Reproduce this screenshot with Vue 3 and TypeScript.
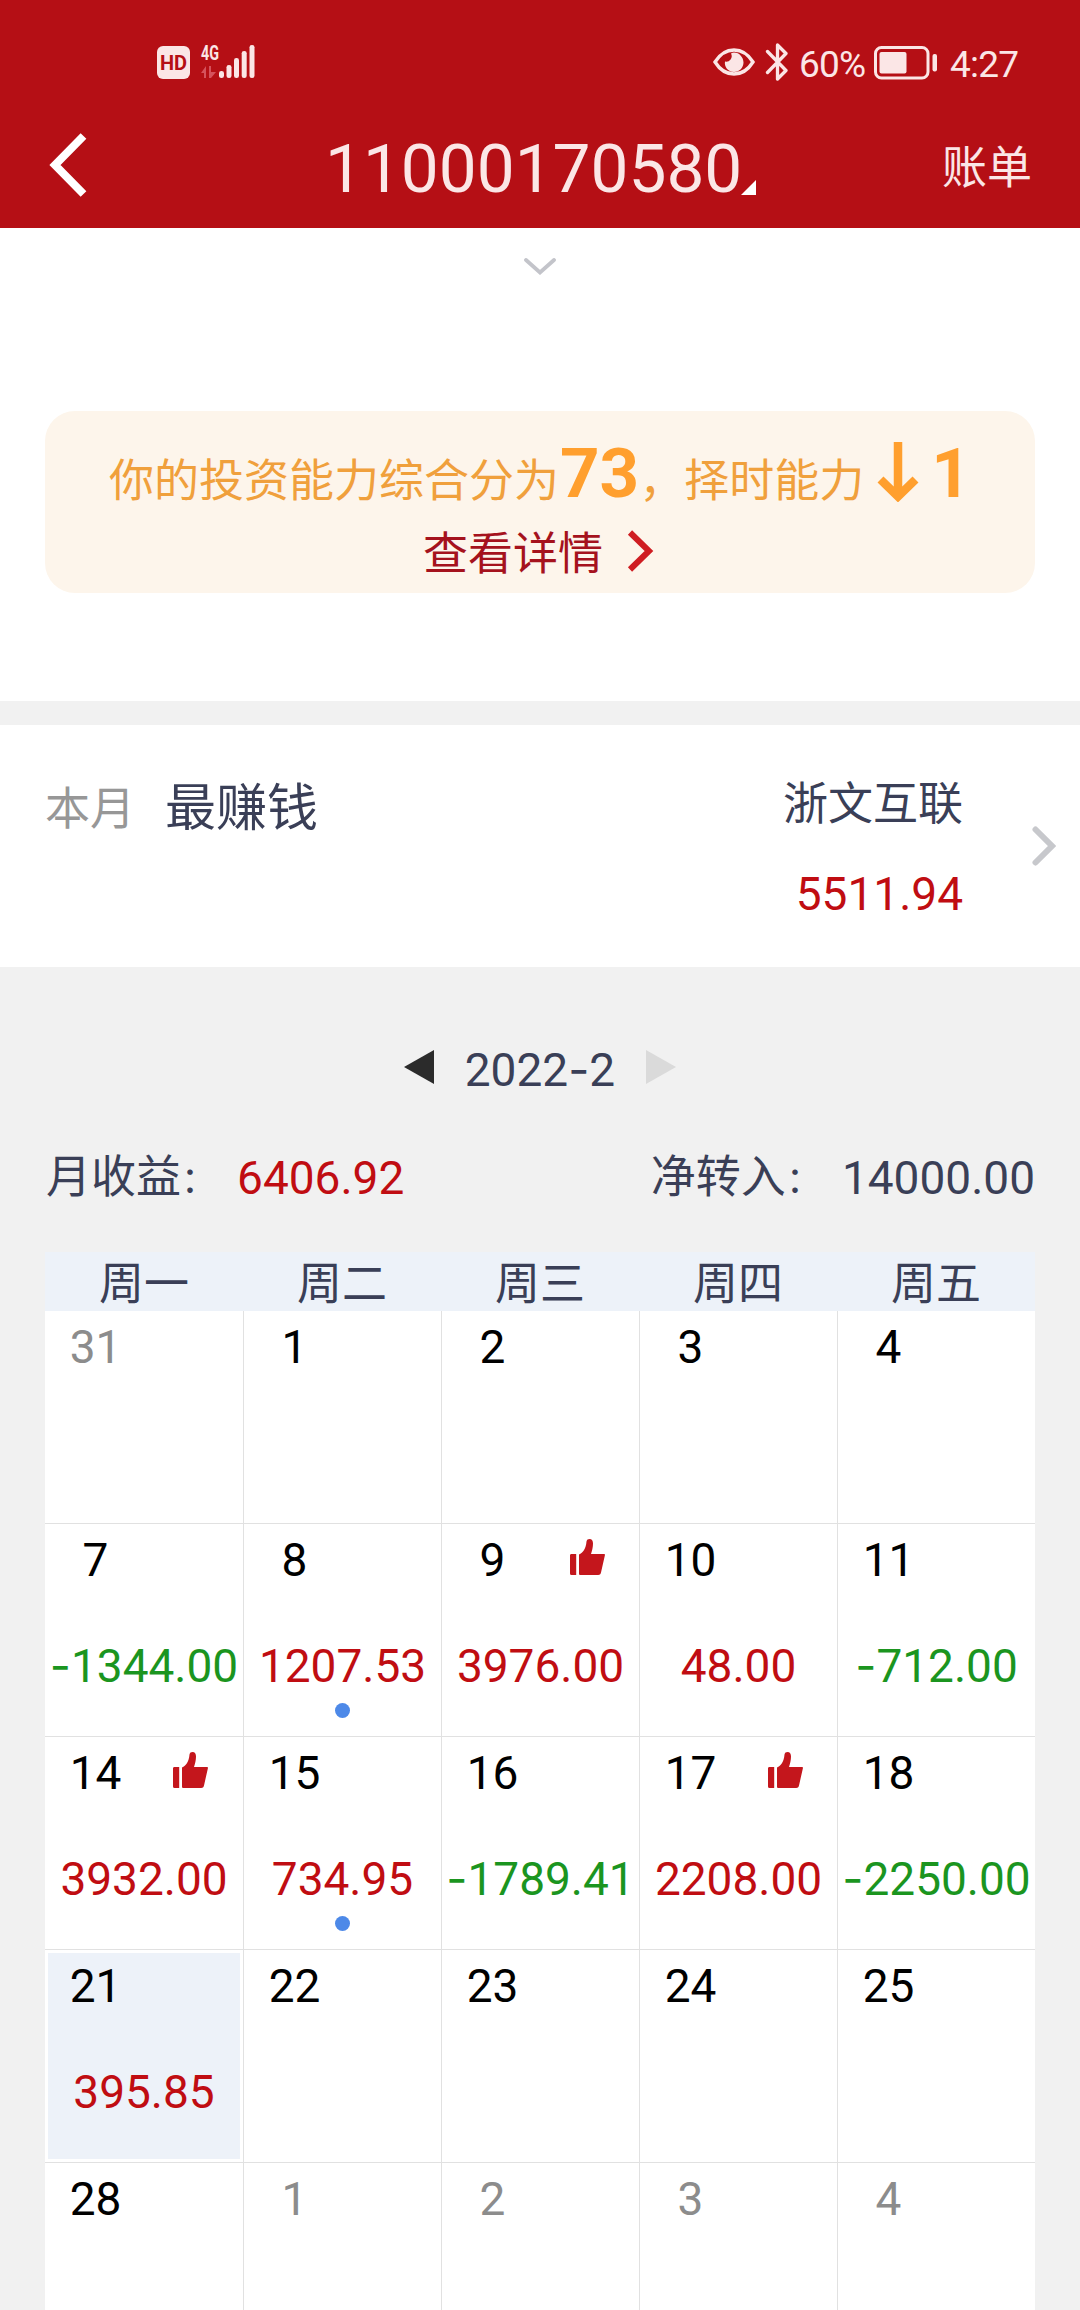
<script setup lang="ts">
interface Day {
  day: number
  value?: string
  top?: boolean
  dot?: boolean
  muted?: boolean
  selected?: boolean
}

const weekdays: string[] = ['周一', '周二', '周三', '周四', '周五']

const days: Day[] = [
  { day: 31, muted: true }, { day: 1 }, { day: 2 }, { day: 3 }, { day: 4 },
  { day: 7, value: '-1344.00' },
  { day: 8, value: '1207.53', dot: true },
  { day: 9, value: '3976.00', top: true },
  { day: 10, value: '48.00' },
  { day: 11, value: '-712.00' },
  { day: 14, value: '3932.00', top: true },
  { day: 15, value: '734.95', dot: true },
  { day: 16, value: '-1789.41' },
  { day: 17, value: '2208.00', top: true },
  { day: 18, value: '-2250.00' },
  { day: 21, value: '395.85', selected: true },
  { day: 22 }, { day: 23 }, { day: 24 }, { day: 25 },
  { day: 28 },
  { day: 1, muted: true }, { day: 2, muted: true }, { day: 3, muted: true }, { day: 4, muted: true },
]

const isLoss = (value: string): boolean => value.startsWith('-')
const digits = (value: string): string => value.replace('-', '')
</script>

<template>
  <div class="screen" lang="zh-CN">
    <header class="header">
      <div class="status">
        <div class="status-left">
          <span class="hd">HD</span>
          <svg class="signal" width="56" height="46" viewBox="0 -10 56 46">
            <text x="1" y="17" class="net" textLength="18" lengthAdjust="spacingAndGlyphs">4G</text>
            <g fill="#d5525c">
              <path d="M6 23v12H4V30H1z M9 23h2v6h5l-5 6H9z" />
            </g>
            <g fill="#fbe6e6">
              <rect x="19" y="28" width="5" height="7" rx="2.3" />
              <rect x="26.500" y="22" width="5" height="13" rx="2.3" />
              <rect x="34" y="15" width="5" height="20" rx="2.3" />
              <rect x="41.700" y="8" width="5" height="27" rx="2.300" />
              <rect x="49.500" y="2" width="5" height="33" rx="2.300" />
            </g>
          </svg>
        </div>
        <div class="status-right">
          <svg class="eye" width="42" height="30" viewBox="0 0 42 30">
            <path d="M2 15C7 7 13 3 21 3s14 4 19 12c-5 8-11 12-19 12S7 23 2 15z" fill="none" stroke="#fbe6e6" stroke-width="3.400" />
            <path d="M18 6.500a5.500 5.500 0 0 1-6 8c-1 5 3 10.500 9 10.500 5.500 0 9.500-4.500 9.500-9.500S26.500 5.500 21 5.500c-1 0-2 .3-3 1z" fill="#fbe6e6" />
          </svg>
          <svg class="bt" width="24" height="38" viewBox="0 0 24 38">
            <path d="M2.500 8.500 21 27.500 12.500 36V2L21 10.500 2.500 29.500" fill="none" stroke="#fbe6e6" stroke-width="3.300" stroke-linejoin="round" stroke-linecap="round" />
          </svg>
          <span class="percent">60%</span>
          <svg class="battery" width="64" height="34" viewBox="0 0 64 34">
            <rect x="1.500" y="1.500" width="52.500" height="30.500" rx="6" fill="none" stroke="#fbe6e6" stroke-width="3" />
            <rect x="5.500" y="6" width="27" height="21.500" rx="2" fill="#fbe6e6" />
            <rect x="58.500" y="8" width="4.500" height="17.500" rx="2" fill="#fbe6e6" />
          </svg>
          <span class="clock">4:27</span>
        </div>
      </div>
      <nav class="nav">
        <svg class="back" width="40" height="66" viewBox="0 0 40 66">
          <path d="M34.500 4 6 33l28.500 29" fill="none" stroke="#fff" stroke-width="8" />
        </svg>
        <div class="account">
          <span>11000170580</span>
          <svg width="15" height="15" viewBox="0 0 15 15"><path d="M15 0v15H0z" fill="#fff" /></svg>
        </div>
        <span class="bill">账单</span>
      </nav>
    </header>

    <section class="summary">
      <svg class="expand" width="32" height="17" viewBox="0 0 32 17">
        <path d="M2 2l14 12.500L30 2" fill="none" stroke="#c3c4ca" stroke-width="3.800" stroke-linecap="round" />
      </svg>
      <div class="score-card">
        <div class="score-line">
          <span>你的投资能力综合分为</span><b class="score">73</b><span>，择时能力</span>
          <svg class="down" width="42" height="60" viewBox="0 0 42 60">
            <path d="M21 0v54M3.500 37.500 21 54.500l17.500-17" fill="none" stroke="#ff9f2e" stroke-width="8.500" />
          </svg>
          <b class="delta">1</b>
        </div>
        <div class="detail-line">
          <span>查看详情</span>
          <svg width="28" height="42" viewBox="0 0 28 42">
            <path d="M3 2.500 22 21 3 39.500" fill="none" stroke="#cf1d22" stroke-width="6" />
          </svg>
        </div>
      </div>
    </section>

    <section class="best">
      <span class="period">本月</span>
      <span class="best-title">最赚钱</span>
      <div class="stock">
        <span class="stock-name">浙文互联</span>
        <span class="stock-gain">5511.94</span>
      </div>
      <svg class="more" width="24" height="40" viewBox="0 0 24 40">
        <path d="M3.500 3.500 20 20 3.500 36.500" fill="none" stroke="#c7c8cc" stroke-width="6" stroke-linecap="round" />
      </svg>
    </section>

    <section class="month">
      <svg width="30" height="34" viewBox="0 0 30 34"><path d="M30 0v34L0 17z" fill="#2b2b2b" /></svg>
      <span class="month-name">2022<i class="minus">-</i>2</span>
      <svg width="30" height="34" viewBox="0 0 30 34"><path d="M0 0v34l30-17z" fill="#dadada" /></svg>
    </section>

    <section class="totals">
      <span>月收益<i class="colon">：</i></span><span class="total-gain">6406.92</span>
      <span class="transfer">净转入<i class="colon">：</i></span><span class="transfer-sum">14000.00</span>
    </section>

    <section class="calendar">
      <div class="week">
        <span v-for="name in weekdays" :key="name">{{ name }}</span>
      </div>
      <div class="grid">
        <div
          v-for="(d, i) in days"
          :key="i"
          class="cell"
          :class="{ muted: d.muted, last: i % 5 === 4 }"
        >
          <div class="cell-body" :class="{ selected: d.selected }">
            <div class="cell-head">
              <span class="day">{{ d.day }}</span>
              <svg v-if="d.top" class="thumb" width="35" height="36" viewBox="0 0 35 36">
                <path d="M1 15h5.200v21H1.500A1.500 1.500 0 0 1 0 34.500V16.500A1.500 1.500 0 0 1 1 15z" fill="#c4161c" />
                <path d="M9 15.500c4-1.500 7-6 7.500-13C16.700.8 18 0 19.500 0 22 0 23 2 23 4.500c0 4-1 7-2 10.500h13c.8 0 1 .5.900 1.200L31 33.500c-.5 1.800-1.200 2.500-2.800 2.500H10.500c-1 0-1.500-.5-1.500-1.500z" fill="#c4161c" />
              </svg>
            </div>
            <div v-if="d.value" class="value" :class="{ loss: isLoss(d.value) }">
              <i v-if="isLoss(d.value)" class="minus">-</i>{{ digits(d.value) }}
            </div>
            <i v-if="d.dot" class="dot"></i>
          </div>
        </div>
      </div>
    </section>
  </div>
</template>

<style>
body {
  background: #f1f1f1;
}
</style>

<style scoped>
.screen {
  width: 1080px;
  height: 2310px;
  overflow: hidden;
  background: #f1f1f1;
  color: #3a3f57;
  font-family: Roboto, "Noto Sans CJK SC", sans-serif;
  font-size: 45px;
  line-height: 60px;
  white-space: nowrap;
}
.screen svg {
  display: block;
  flex: none;
}
.header {
  height: 228px;
  background: #b50f15;
  color: #fbe6e6;
}
.status {
  display: flex;
  justify-content: space-between;
  height: 124px;
  box-sizing: border-box;
  padding: 43px 61px 0 157px;
}
.status-left,
.status-right {
  display: flex;
  align-items: flex-start;
}
.hd {
  width: 33px;
  height: 33px;
  margin-top: 3px;
  border-radius: 6px;
  background: #fbe6e6;
  color: #b50f15;
  font-size: 20px;
  font-weight: 700;
  line-height: 34px;
  text-align: center;
}
.signal {
  margin: -10px 0 0 10px;
}
.net {
  fill: #fbe6e6;
  font-family: Roboto, sans-serif;
  font-size: 21px;
  font-weight: 700;
}
.eye {
  margin-top: 4px;
}
.bt {
  margin-left: 10px;
}
.percent,
.clock {
  height: 42px;
  font-size: 37px;
  line-height: 44px;
  letter-spacing: -0.8px;
}
.percent {
  width: 75px;
  margin-left: 10px;
}
.battery {
  margin-top: 3px;
}
.clock {
  width: 69px;
  margin-left: 12px;
}
.nav {
  display: flex;
  align-items: center;
  height: 90px;
}
.back {
  margin: -9px 0 0 49px;
}
.account {
  display: flex;
  align-items: flex-end;
  width: 617px;
  margin-left: 236px;
  font-size: 67.500px;
  line-height: 82px;
}
.account svg {
  margin: 0 0 15px -1px;
}
.summary {
  height: 473px;
  background: #fff;
  display: flex;
  flex-direction: column;
  align-items: center;
}
.expand {
  margin-top: 30px;
}
.score-card {
  width: 990px;
  height: 182px;
  margin-top: 136px;
  border-radius: 30px;
  background: #fdf5eb;
  color: #f0a03c;
}
.score-line {
  display: flex;
  align-items: baseline;
  height: 90px;
  padding: 18px 0 0 64px;
  line-height: 90px;
}
.score,
.delta {
  color: #ff9f2e;
  font-size: 69px;
  font-weight: 700;
}
.score {
  margin-left: 1px;
}
.down {
  margin: 0 0 0 13px;
  position: relative;
  top: 5px;
}
.delta {
  margin-left: 12px;
}
.detail-line {
  display: flex;
  align-items: center;
  margin: 6px 0 0 378px;
  color: #a5121d;
}
.detail-line svg {
  margin-left: 24px;
  margin-top: -9px;
}
.best {
  display: flex;
  height: 242px;
  margin-top: 24px;
  background: #fff;
}
.period {
  margin: 55px 0 0 45px;
  color: #979797;
}
.best-title {
  margin: 54px 0 0 30px;
  font-size: 51px;
}
.stock {
  display: flex;
  flex-direction: column;
  align-items: flex-end;
  margin-left: auto;
  padding-top: 50px;
}
.stock-gain {
  margin-top: 29px;
  color: #c00d12;
  font-size: 46px;
}
.more {
  margin: 101px 24px 0 69px;
}
.month {
  display: flex;
  justify-content: center;
  align-items: center;
  height: 60px;
  margin-top: 73px;
  padding-bottom: 6px;
}
.month svg {
  margin-top: -6px;
}
.month-name {
  width: 152px;
  margin: 0 30px;
  font-size: 46px;
  text-align: center;
}
.minus {
  font-family: Inter, sans-serif;
  font-style: normal;
  line-height: 0;
}
.colon {
  margin-right: 9px;
  font-size: 36px;
  font-style: normal;
  line-height: 0;
}
.totals {
  display: flex;
  margin: 42px 45px 0 46px;
}
.total-gain {
  margin-left: 11px;
  font-size: 46px;
  color: #c00d12;
}
.transfer {
  margin-left: auto;
}
.transfer-sum {
  margin-left: 11px;
  font-size: 46px;
}
.calendar {
  width: 990px;
  margin: 44px 0 0 45px;
}
.week {
  display: grid;
  grid-template-columns: repeat(5, 198px);
  height: 59px;
  background: #edf2f9;
  line-height: 65px;
  text-align: center;
}
.grid {
  display: grid;
  grid-template-columns: 199px 198px 198px 198px 197px;
  grid-auto-rows: 213px;
  background: #fff;
}
.cell {
  box-sizing: border-box;
  border-right: 1px solid #e1e1e1;
  border-bottom: 1px solid #e1e1e1;
  padding: 3px;
  color: #000;
}
.last {
  border-right: 0;
}
.muted {
  color: #8c8c8c;
}
.cell-body {
  display: flex;
  flex-direction: column;
  align-items: center;
  height: 206px;
}
.selected {
  background: #edf2f9;
}
.cell-head {
  display: flex;
  align-self: stretch;
  height: 60px;
  padding-top: 3px;
}
.day {
  width: 95px;
  font-size: 46px;
  text-align: center;
}
.thumb {
  margin: 9px 0 0 30px;
}
.value {
  margin-top: 46px;
  color: #c00d12;
  font-size: 46px;
}
.loss {
  color: #1b951f;
}
.dot {
  width: 15px;
  height: 15px;
  margin-top: 7px;
  border-radius: 50%;
  background: #4d89e8;
}
</style>
